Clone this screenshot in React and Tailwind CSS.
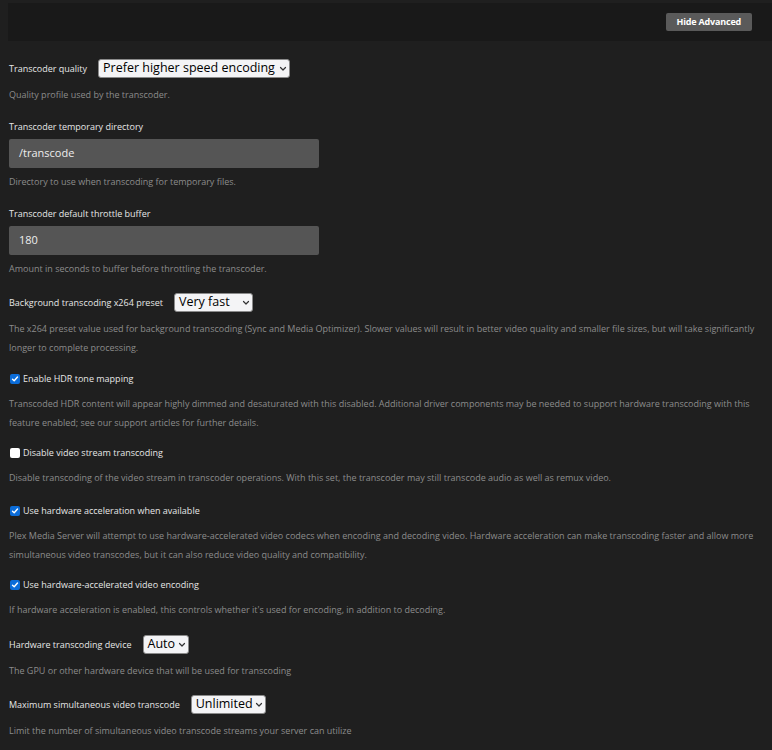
import { useState } from "react";

function Chevron() {
  return (
    <svg width="8" height="6" viewBox="0 0 8 6" fill="none" className="shrink-0">
      <path d="M1.5 1.5L4 4L6.5 1.5" stroke="#333" strokeWidth="1.2" strokeLinecap="round" strokeLinejoin="round" />
    </svg>
  );
}

function Select({ value, width }) {
  return (
    <div className={`inline-flex items-center justify-between h-[19px] pl-[4px] pr-[2px] bg-[#f4f4f6] border border-[#8a8a8a] rounded-[3px] text-[12.5px] leading-none text-black ${width}`}>
      <span className="whitespace-nowrap">{value}</span>
      <Chevron />
    </div>
  );
}

function Checkbox({ checked }) {
  if (!checked) {
    return <span className="inline-block w-[10px] h-[10px] rounded-[2px] bg-white" />;
  }
  return (
    <span className="inline-flex items-center justify-center w-[10px] h-[10px] rounded-[2px] bg-[#0b6cd8]">
      <svg width="8" height="8" viewBox="0 0 8 8" fill="none">
        <path d="M1.5 4.2L3.2 5.8L6.5 2" stroke="white" strokeWidth="1.4" strokeLinecap="round" strokeLinejoin="round" />
      </svg>
    </span>
  );
}

function Help({ children, className = "mt-[7px]" }) {
  return <p className={`${className} text-[9px] leading-[19px] text-[#8c8c8c]`}>{children}</p>;
}

function SelectRow({ label, value, width, help, top }) {
  return (
    <div className={top}>
      <div className="flex items-center gap-[11px] h-[19px]">
        <span className="text-[9px] text-[#e6e6e6]">{label}</span>
        <Select value={value} width={width} />
      </div>
      <Help>{help}</Help>
    </div>
  );
}

function InputRow({ label, value, help, top }) {
  return (
    <div className={top}>
      <div className="text-[9px] leading-[14px] text-[#e6e6e6]">{label}</div>
      <div className="mt-[5px] w-[310px] h-[29px] bg-[#555555] rounded-[2px] flex items-center px-[10px] text-[11px] text-[#eeeeee]">
        {value}
      </div>
      <Help className="mt-[4px]">{help}</Help>
    </div>
  );
}

function CheckRow({ label, checked, help, top }) {
  return (
    <div className={top}>
      <div className="flex items-center gap-[3px] h-[16px] pl-[1px]">
        <Checkbox checked={checked} />
        <span className="text-[9px] text-[#e6e6e6]">{label}</span>
      </div>
      <Help>{help}</Help>
    </div>
  );
}

export default function App() {
  const [advanced] = useState(true);

  return (
    <div className="min-h-screen bg-[#1f1f1f] pt-[3px]" style={{ fontFamily: '"Open Sans", "Noto Sans", sans-serif' }}>
      <div className="ml-[8px] h-[38px] bg-[#191919] flex items-center justify-end pr-[20px]">
        <button className="h-[18px] px-[11px] rounded-[2px] bg-[#5a5a5a] text-white text-[9px] font-bold tracking-[-0.2px]">
          {advanced ? "Hide Advanced" : "Show Advanced"}
        </button>
      </div>

      <div className="px-[9px] pt-[18px] pb-[20px]">
        <SelectRow
          top="mt-0"
          label="Transcoder quality"
          value="Prefer higher speed encoding"
          width="w-[192px]"
          help="Quality profile used by the transcoder."
        />
        <InputRow
          top="mt-[16px]"
          label="Transcoder temporary directory"
          value="/transcode"
          help="Directory to use when transcoding for temporary files."
        />
        <InputRow
          top="mt-[16px]"
          label="Transcoder default throttle buffer"
          value="180"
          help="Amount in seconds to buffer before throttling the transcoder."
        />
        <SelectRow
          top="mt-[15px]"
          label="Background transcoding x264 preset"
          value="Very fast"
          width="w-[79px]"
          help={
            <>
              The x264 preset value used for background transcoding (Sync and Media Optimizer). Slower values will result in better video quality and smaller file sizes, but will take significantly
              <br />
              longer to complete processing.
            </>
          }
        />
        <CheckRow
          top="mt-[14px]"
          checked
          label="Enable HDR tone mapping"
          help={
            <>
              Transcoded HDR content will appear highly dimmed and desaturated with this disabled. Additional driver components may be needed to support hardware transcoding with this
              <br />
              feature enabled; see our support articles for further details.
            </>
          }
        />
        <CheckRow
          top="mt-[13px]"
          label="Disable video stream transcoding"
          help="Disable transcoding of the video stream in transcoder operations. With this set, the transcoder may still transcode audio as well as remux video."
        />
        <CheckRow
          top="mt-[16px]"
          checked
          label="Use hardware acceleration when available"
          help={
            <>
              Plex Media Server will attempt to use hardware-accelerated video codecs when encoding and decoding video. Hardware acceleration can make transcoding faster and allow more
              <br />
              simultaneous video transcodes, but it can also reduce video quality and compatibility.
            </>
          }
        />
        <CheckRow
          top="mt-[13px]"
          checked
          label="Use hardware-accelerated video encoding"
          help="If hardware acceleration is enabled, this controls whether it's used for encoding, in addition to decoding."
        />
        <SelectRow
          top="mt-[16px]"
          label="Hardware transcoding device"
          value="Auto"
          width="w-[46px]"
          help="The GPU or other hardware device that will be used for transcoding"
        />
        <SelectRow
          top="mt-[15px]"
          label="Maximum simultaneous video transcode"
          value="Unlimited"
          width="w-[75px]"
          help="Limit the number of simultaneous video transcode streams your server can utilize"
        />
      </div>
    </div>
  );
}
